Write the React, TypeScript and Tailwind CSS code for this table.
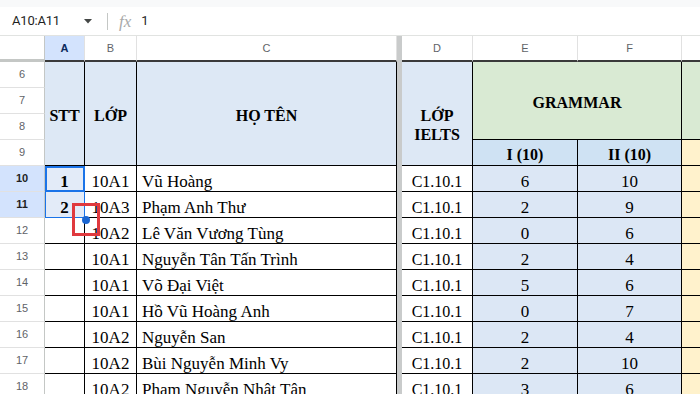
import React from "react";

const serif = "font-['Liberation_Serif','Times_New_Roman',serif]";

const rows = [
  { n: 10, a: "1", b: "10A1", c: "Vũ Hoàng", d: "C1.10.1", e: "6", f: "10" },
  { n: 11, a: "2", b: "10A3", c: "Phạm Anh Thư", d: "C1.10.1", e: "2", f: "9" },
  { n: 12, a: "", b: "10A2", c: "Lê Văn Vương Tùng", d: "C1.10.1", e: "0", f: "6" },
  { n: 13, a: "", b: "10A1", c: "Nguyễn Tân Tấn Trình", d: "C1.10.1", e: "2", f: "4" },
  { n: 14, a: "", b: "10A1", c: "Võ Đại Việt", d: "C1.10.1", e: "5", f: "6" },
  { n: 15, a: "", b: "10A1", c: "Hồ Vũ Hoàng Anh", d: "C1.10.1", e: "0", f: "7" },
  { n: 16, a: "", b: "10A2", c: "Nguyễn San", d: "C1.10.1", e: "2", f: "4" },
  { n: 17, a: "", b: "10A2", c: "Bùi Nguyễn Minh Vy", d: "C1.10.1", e: "2", f: "10" },
  { n: 18, a: "", b: "10A2", c: "Phạm Nguyễn Nhật Tân", d: "C1.10.1", e: "3", f: "6" },
];

function ColHead({ label, active }: { label: string; active?: boolean }) {
  return (
    <div
      className={
        "flex items-center justify-center border-r border-r-[#e1e1e1] border-b-2 border-b-[#3a3a3a] text-[11px] font-['Liberation_Sans',Arial,sans-serif] " +
        (active ? "bg-[#d3e3fd] text-[#0b2a5c] font-bold" : "bg-white text-[#5f6368]")
      }
    >
      {label}
    </div>
  );
}

function RowHead({ n, active }: { n: number; active?: boolean }) {
  return (
    <div
      className={
        "flex items-center justify-center border-b border-b-[#e1e1e1] border-r border-r-[#c4c7c5] text-[11px] font-['Liberation_Sans',Arial,sans-serif] " +
        (active ? "bg-[#d3e3fd] text-[#1f1f1f] font-bold" : "bg-white text-[#5f6368]")
      }
    >
      {n}
    </div>
  );
}

export default function App() {
  return (
    <div className="relative w-[700px] h-[394px] overflow-hidden bg-white">
      <div className="h-[7px] bg-[#f8f9fa]" />
      <div className="h-[29px] flex items-center border-b border-b-[#e1e3e1] font-['Roboto','Liberation_Sans',sans-serif]">
        <div className="w-[107px] flex items-center justify-between pl-[12px] pr-[15px]">
          <span className="text-[13px] text-[#1f1f1f] tracking-[-0.2px]">A10:A11</span>
          <svg width="8" height="5" viewBox="0 0 8 5">
            <path d="M0 0 L8 0 L4 4.5 Z" fill="#444746" />
          </svg>
        </div>
        <div className="w-px h-[17px] bg-[#c4c7c5]" />
        <span className="ml-[11px] italic text-[#a9a9a9] text-[17px] font-['Liberation_Serif',serif] leading-none">
          fx
        </span>
        <span className="ml-[10px] text-[13px] text-[#1f1f1f]">1</span>
      </div>

      <div className="grid grid-cols-[45px_40px_52px_260px_5px_71px_105px_104px_30px] grid-rows-[26px_repeat(13,26px)]">
        {/* header row */}
        <div className="bg-white border-b-[3px] border-b-[#c4c7c5] border-r border-r-[#c4c7c5]" />
        <ColHead label="A" active />
        <ColHead label="B" />
        <ColHead label="C" />
        <div className="col-start-5 row-start-1 row-span-14 bg-[#c9cbcb]" />
        <ColHead label="D" />
        <ColHead label="E" />
        <ColHead label="F" />
        <ColHead label="" />

        {/* row headers 6-9 */}
        {[6, 7, 8, 9].map((n, i) => (
          <div key={n} className={"col-start-1 " + ["row-start-2", "row-start-3", "row-start-4", "row-start-5"][i] + " grid"}>
            <RowHead n={n} />
          </div>
        ))}

        {/* merged header cells */}
        <div className={"col-start-2 row-start-2 row-span-4 bg-[#dde8f5] border-r border-b border-black flex items-center justify-center pt-[4px] font-bold text-[16px] leading-[19px] text-black " + serif}>
          STT
        </div>
        <div className={"col-start-3 row-start-2 row-span-4 bg-[#dde8f5] border-r border-b border-black flex items-center justify-center pt-[4px] font-bold text-[16px] leading-[19px] text-black " + serif}>
          LỚP
        </div>
        <div className={"col-start-4 row-start-2 row-span-4 bg-[#dde8f5] border-r border-b border-black flex items-center justify-center pt-[4px] font-bold text-[16px] leading-[19px] text-black " + serif}>
          HỌ TÊN
        </div>
        <div className={"col-start-6 row-start-2 row-span-4 bg-[#dde8f5] border-r border-b border-black flex flex-col items-center pt-[44px] font-bold text-[16px] leading-[19px] text-black " + serif}>
          <span>LỚP</span>
          <span>IELTS</span>
        </div>
        <div className={"col-start-7 col-span-2 row-start-2 row-span-3 bg-[#d9ead3] border-r border-b border-black flex items-center justify-center pt-[4px] font-bold text-[16px] leading-[19px] text-black " + serif}>
          GRAMMAR
        </div>
        <div className="col-start-9 row-start-2 row-span-3 bg-[#d9ead3] border-b border-black" />
        <div className={"col-start-7 row-start-5 bg-[#cfe2f3] border-r border-b border-black flex items-center justify-center pt-[4px] font-bold text-[16px] leading-[19px] text-black " + serif}>
          I (10)
        </div>
        <div className={"col-start-8 row-start-5 bg-[#cfe2f3] border-r border-b border-black flex items-center justify-center pt-[4px] font-bold text-[16px] leading-[19px] text-black " + serif}>
          II (10)
        </div>
        <div className="col-start-9 row-start-5 bg-[#fff2cc] border-b border-black" />

        {/* data rows */}
        {rows.map((r) => {
          const sel = r.n === 10 || r.n === 11;
          return (
            <React.Fragment key={r.n}>
              <div className="col-start-1 grid">
                <RowHead n={r.n} active={sel} />
              </div>
              <div
                className={
                  "border-r border-b border-black flex items-center justify-center pt-[5px] font-bold text-[17px] leading-[19px] text-black " +
                  serif +
                  (sel ? " bg-[#e3ebf8]" : " bg-white")
                }
              >
                {r.a}
              </div>
              <div className={"bg-white border-r border-b border-black flex items-center justify-center pt-[5px] text-[17px] leading-[19px] text-black " + serif}>
                {r.b}
              </div>
              <div className={"bg-white border-r border-b border-black flex items-center pl-[5px] pt-[5px] text-[17px] leading-[19px] text-black whitespace-nowrap " + serif}>
                {r.c}
              </div>
              <div className={"col-start-6 bg-white border-r border-b border-black flex items-center justify-center pt-[5px] text-[16px] leading-[19px] text-black " + serif}>
                {r.d}
              </div>
              <div className={"bg-[#dce7f5] border-r border-b border-black flex items-center justify-center pt-[5px] text-[17px] leading-[19px] text-black " + serif}>
                {r.e}
              </div>
              <div className={"bg-[#dce7f5] border-r border-b border-black flex items-center justify-center pt-[5px] text-[17px] leading-[19px] text-black " + serif}>
                {r.f}
              </div>
              <div className="bg-[#fff2cc] border-b border-black" />
            </React.Fragment>
          );
        })}
      </div>

      {/* selection overlays */}
      <div className="absolute left-[45px] top-[166px] w-[40px] h-[52px] border border-[#1a73e8]" />
      <div className="absolute left-[45px] top-[166px] w-[40px] h-[26px] border-2 border-[#1a73e8]" />
      <div className="absolute left-[72px] top-[203px] w-[28px] h-[33px] border-[3px] border-[#e0393e]" />
      <div className="absolute left-[82px] top-[216px] w-[8px] h-[8px] rounded-full bg-[#1a66d2]" />
    </div>
  );
}
